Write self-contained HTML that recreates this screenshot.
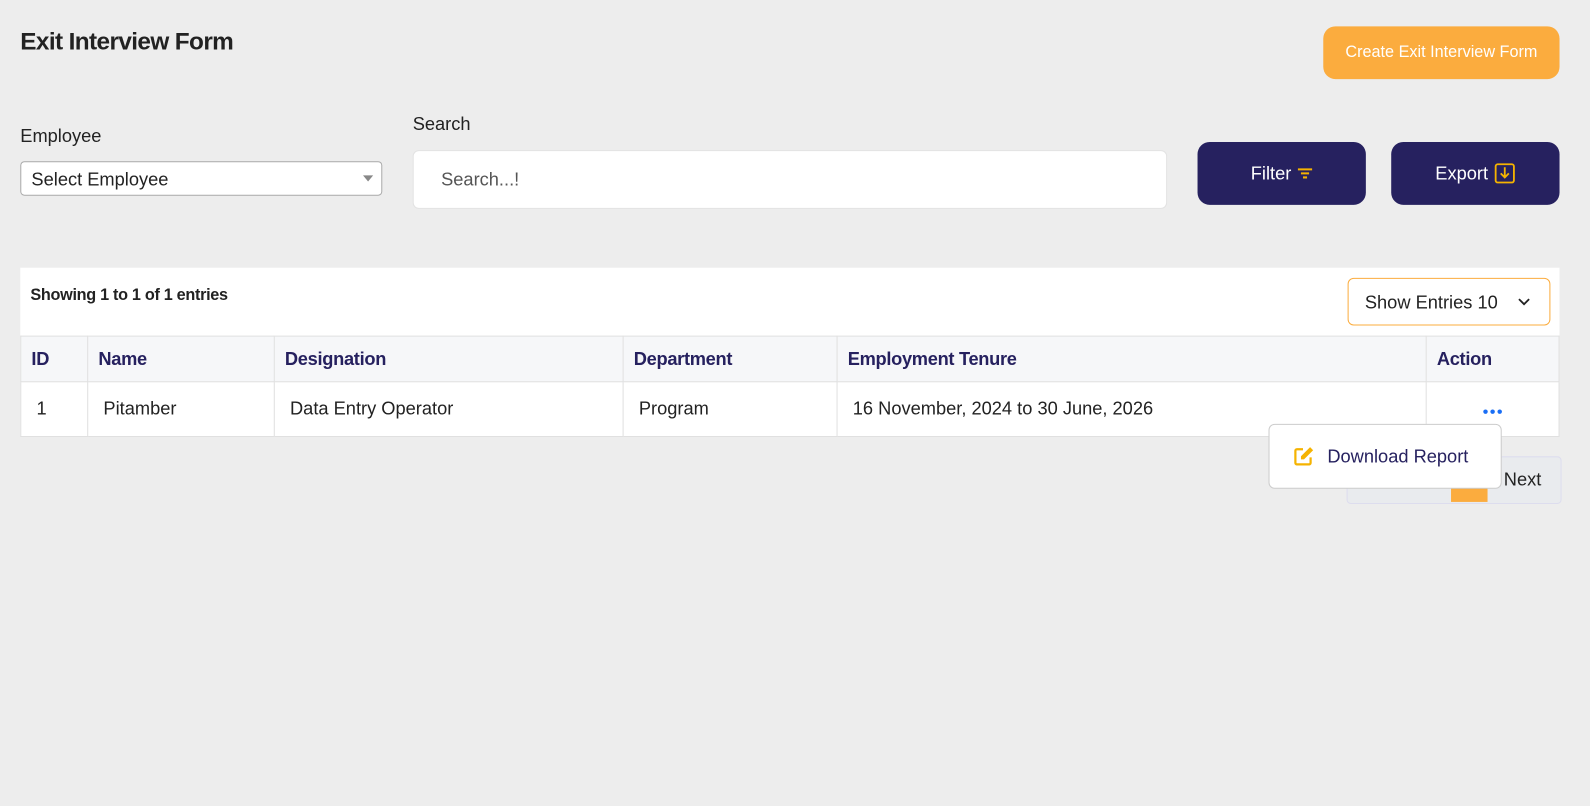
<!DOCTYPE html>
<html><head><style>
body{margin:0;width:1590px;height:806px;background:#ededed;font-family:"Liberation Sans",sans-serif;position:relative;overflow:hidden;color:#222}
#w{position:absolute;left:0;top:0;width:1568px;height:795px;transform:scale(1.014);transform-origin:0 0}
.a{position:absolute}
h1{position:absolute;left:20px;top:28px;margin:0;font-size:24px;font-weight:bold;color:#222;letter-spacing:-0.6px}
.btn{position:absolute;border-radius:12px;color:#fff;font-weight:bold;display:flex;align-items:center;justify-content:center;font-size:18px}
table{border-collapse:collapse;position:absolute;left:20px;top:331px;width:1518px;background:#fff}
td,th{border:1px solid #e0e0e0;text-align:left;padding:0 10px;font-size:18px}
th{height:44px;background:#f6f7f9;color:#26215f;font-weight:bold;letter-spacing:-0.3px}
td{height:53px;padding-left:15px;color:#222}
</style></head><body><div id="w">
<h1>Exit Interview Form</h1>
<div class="btn" style="left:1305px;top:26px;width:233px;height:52px;background:#fbac3e;font-size:16px;font-weight:normal">Create Exit Interview Form</div>
<div class="a" style="left:20px;top:124px;font-size:18px">Employee</div>
<div class="a" style="left:20px;top:159px;width:355px;height:32px;border:1px solid #aaa;border-radius:4px;background:#fff;font-size:18px;line-height:34px;box-sizing:content-box"><span style="margin-left:10px">Select Employee</span><span style="position:absolute;right:8px;top:13px;border:5px solid transparent;border-top:6px solid #888"></span></div>
<div class="a" style="left:407px;top:112px;font-size:18px">Search</div>
<div class="a" style="left:407px;top:148px;width:742px;height:56px;border:1px solid #e3e3e3;border-radius:6px;background:#fff;font-size:18px;line-height:56px;color:#555"><span style="margin-left:27px">Search...!</span></div>
<div class="btn" style="left:1181px;top:140px;width:166px;height:62px;background:#26215f;font-weight:normal">Filter&nbsp;<svg width="16" height="14"><path d="M1 3h14M4 7h8M6 11h4" stroke="#f5b301" stroke-width="2"/></svg></div>
<div class="btn" style="left:1372px;top:140px;width:166px;height:62px;background:#26215f;font-weight:normal">Export&nbsp;<svg width="22" height="22"><rect x="2" y="2" width="18" height="18" rx="2" fill="none" stroke="#f5b301" stroke-width="1.8"/><path d="M11 5v10M7 11l4 4 4-4" fill="none" stroke="#f5b301" stroke-width="1.8"/></svg></div>
<div class="a" style="left:20px;top:264px;width:1518px;height:67px;background:#fff"></div>
<div class="a" style="left:30px;top:283px;font-size:16px;font-weight:bold;letter-spacing:-0.3px">Showing 1 to 1 of 1 entries</div>
<div class="a" style="left:1329px;top:274px;width:198px;height:45px;border:1px solid #fbac3e;border-radius:6px;background:#fff;font-size:18px;line-height:46px"><span style="margin-left:16px">Show Entries 10</span><svg class="a" style="right:18px;top:18px" width="14" height="10"><path d="M2 2l5 5 5-5" fill="none" stroke="#222" stroke-width="1.8"/></svg></div>
<table><tr><th style="width:45px">ID</th><th style="width:163px">Name</th><th style="width:323px">Designation</th><th style="width:190px">Department</th><th style="width:560px">Employment Tenure</th><th>Action</th></tr>
<tr><td>1</td><td>Pitamber</td><td>Data Entry Operator</td><td>Program</td><td>16 November, 2024 to 30 June, 2026</td><td style="text-align:center;padding:0"><svg width="20" height="6"><circle cx="3" cy="3" r="2.2" fill="#1a6ef5"/><circle cx="10" cy="3" r="2.2" fill="#1a6ef5"/><circle cx="17" cy="3" r="2.2" fill="#1a6ef5"/></svg></td></tr></table>
<div class="a" style="left:1328px;top:450px;width:210px;height:45px;border:1px solid #dde;border-radius:4px;background:#e9ebee"></div>
<div class="a" style="left:1431px;top:460px;width:36px;height:35px;background:#fbac3e"></div>
<div class="a" style="left:1483px;top:463px;font-size:18px">Next</div>
<div class="a" style="left:1251px;top:418px;width:228px;height:62px;border:1px solid #ccc;border-radius:6px;background:#fff;display:flex;align-items:center">
<svg style="margin-left:23px" width="22" height="22"><path d="M10 4H4a1.5 1.5 0 0 0-1.5 1.5v12A1.5 1.5 0 0 0 4 19h12a1.5 1.5 0 0 0 1.5-1.5V12" fill="none" stroke="#f5b301" stroke-width="2.2"/><path d="M17 2l3 3-9 9H8v-3z" fill="#f5b301"/></svg>
<span style="margin-left:12px;font-size:18px;color:#26215f">Download Report</span></div>
</div></body></html>
